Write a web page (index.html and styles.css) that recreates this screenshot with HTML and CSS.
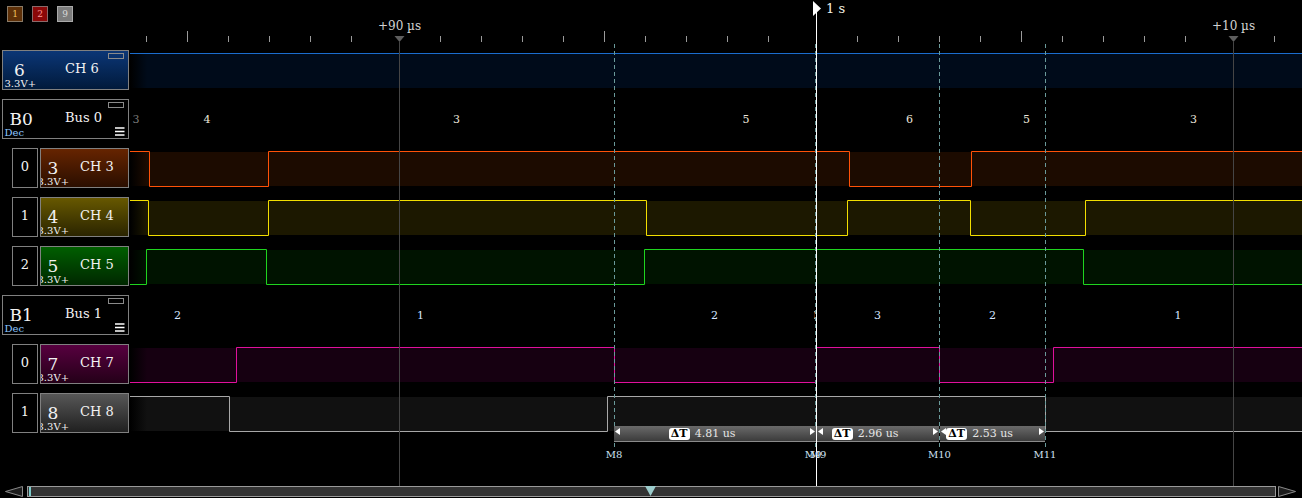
FILE: index.html
```html
<!DOCTYPE html>
<html>
<head>
<meta charset="utf-8">
<title>Logic analyzer</title>
<link rel="stylesheet" href="styles.css">
</head>
<body>
<div class="app">
  <header class="header">
    <svg class="ruler" width="1302" height="50" viewBox="0 0 1302 50">
      <g class="ticks">
        <line x1="146.5" y1="36" x2="146.5" y2="42"/>
        <line class="major" x1="187.5" y1="31" x2="187.5" y2="42"/>
        <line x1="228.5" y1="36" x2="228.5" y2="42"/>
        <line x1="269.5" y1="36" x2="269.5" y2="42"/>
        <line x1="310.5" y1="36" x2="310.5" y2="42"/>
        <line x1="351.5" y1="36" x2="351.5" y2="42"/>
        <line x1="440.5" y1="36" x2="440.5" y2="42"/>
        <line x1="481.5" y1="36" x2="481.5" y2="42"/>
        <line x1="522.5" y1="36" x2="522.5" y2="42"/>
        <line x1="563.5" y1="36" x2="563.5" y2="42"/>
        <line class="major" x1="604.5" y1="31" x2="604.5" y2="42"/>
        <line x1="645.5" y1="36" x2="645.5" y2="42"/>
        <line x1="686.5" y1="36" x2="686.5" y2="42"/>
        <line x1="727.5" y1="36" x2="727.5" y2="42"/>
        <line x1="768.5" y1="36" x2="768.5" y2="42"/>
        <line x1="857.5" y1="36" x2="857.5" y2="42"/>
        <line x1="898.5" y1="36" x2="898.5" y2="42"/>
        <line x1="939.5" y1="36" x2="939.5" y2="42"/>
        <line x1="980.5" y1="36" x2="980.5" y2="42"/>
        <line class="major" x1="1021.5" y1="31" x2="1021.5" y2="42"/>
        <line x1="1062.5" y1="36" x2="1062.5" y2="42"/>
        <line x1="1103.5" y1="36" x2="1103.5" y2="42"/>
        <line x1="1144.5" y1="36" x2="1144.5" y2="42"/>
        <line x1="1185.5" y1="36" x2="1185.5" y2="42"/>
        <line x1="1274.5" y1="36" x2="1274.5" y2="42"/>
      </g>
      <polygon class="mtri" points="394.5,36 404.5,36 399.5,42"/>
      <polygon class="mtri" points="1228.5,36 1238.5,36 1233.5,42"/>
      <text class="rtext" x="399.5" y="30" text-anchor="middle">+90 µs</text>
      <text class="rtext" x="1233.5" y="30" text-anchor="middle">+10 µs</text>
      <text class="ctext" x="826" y="13">1 s</text>
    </svg>
    <div class="swatches">
      <span class="sw sw1">1</span>
      <span class="sw sw2">2</span>
      <span class="sw sw9">9</span>
    </div>
  </header>

  <main class="rows">
    <!-- CH 6 -->
    <div class="row">
      <div class="lbl lbl-main ch6">
        <span class="num">6</span><span class="name">CH 6</span><span class="tag"></span>
        <span class="volt">3.3V+</span>
      </div>
      <svg class="trace" width="1172" height="40" viewBox="130 0 1172 40">
        <defs><linearGradient id="g6" gradientUnits="userSpaceOnUse" x1="130" y1="0" x2="147" y2="0"><stop offset="0" stop-color="#000"/><stop offset="1" stop-color="#000b1a"/></linearGradient></defs>
        <rect x="130" y="4" width="1172" height="34" fill="url(#g6)"/>
        <path class="w6" d="M130 3.5 H1302"/>
      </svg>
    </div>

    <!-- Bus 0 -->
    <div class="row">
      <div class="lbl lbl-main bus">
        <span class="num">B0</span><span class="name">Bus 0</span><span class="tag"></span>
        <span class="volt dec">Dec</span>
        <svg class="menu" width="10" height="9" viewBox="0 0 10 9"><path d="M0 1H9.5M0 4.5H9.5M0 8H9.5" stroke="#fff" stroke-width="1.3"/></svg>
      </div>
      <svg class="trace" width="1172" height="40" viewBox="130 0 1172 40">
        <text class="bv dim" x="136" y="24" text-anchor="middle">3</text>
        <text class="bv" x="207" y="24" text-anchor="middle">4</text>
        <text class="bv" x="456.5" y="24" text-anchor="middle">3</text>
        <text class="bv" x="746" y="24" text-anchor="middle">5</text>
        <text class="bv" x="909.5" y="24" text-anchor="middle">6</text>
        <text class="bv" x="1026.5" y="24" text-anchor="middle">5</text>
        <text class="bv" x="1193.5" y="24" text-anchor="middle">3</text>
      </svg>
    </div>

    <!-- CH 3 -->
    <div class="row">
      <div class="idx">0</div>
      <div class="lbl lbl-sub ch3">
        <span class="num">3</span><span class="name">CH 3</span>
        <span class="volt">3.3V+</span>
      </div>
      <svg class="trace" width="1172" height="40" viewBox="130 0 1172 40">
        <defs><linearGradient id="g3" gradientUnits="userSpaceOnUse" x1="130" y1="0" x2="147" y2="0"><stop offset="0" stop-color="#000"/><stop offset="1" stop-color="#1c0b00"/></linearGradient></defs>
        <rect x="130" y="4" width="1172" height="34" fill="url(#g3)"/>
        <path class="w3" d="M130 3.5 H149.5 V38.5 H268.5 V3.5 H849.5 V38.5 H971.5 V3.5 H1302"/>
      </svg>
    </div>

    <!-- CH 4 -->
    <div class="row">
      <div class="idx">1</div>
      <div class="lbl lbl-sub ch4">
        <span class="num">4</span><span class="name">CH 4</span>
        <span class="volt">3.3V+</span>
      </div>
      <svg class="trace" width="1172" height="40" viewBox="130 0 1172 40">
        <defs><linearGradient id="g4" gradientUnits="userSpaceOnUse" x1="130" y1="0" x2="147" y2="0"><stop offset="0" stop-color="#000"/><stop offset="1" stop-color="#1c1800"/></linearGradient></defs>
        <rect x="130" y="4" width="1172" height="34" fill="url(#g4)"/>
        <path class="w4" d="M130 3.5 H148.5 V38.5 H268.5 V3.5 H646.5 V38.5 H847.5 V3.5 H970.5 V38.5 H1085.5 V3.5 H1302"/>
      </svg>
    </div>

    <!-- CH 5 -->
    <div class="row">
      <div class="idx">2</div>
      <div class="lbl lbl-sub ch5">
        <span class="num">5</span><span class="name">CH 5</span>
        <span class="volt">3.3V+</span>
      </div>
      <svg class="trace" width="1172" height="40" viewBox="130 0 1172 40">
        <defs><linearGradient id="g5" gradientUnits="userSpaceOnUse" x1="130" y1="0" x2="147" y2="0"><stop offset="0" stop-color="#000"/><stop offset="1" stop-color="#001300"/></linearGradient></defs>
        <rect x="130" y="4" width="1172" height="34" fill="url(#g5)"/>
        <path class="w5" d="M130 38.5 H146.5 V3.5 H266.5 V38.5 H644.5 V3.5 H1083.5 V38.5 H1302"/>
      </svg>
    </div>

    <!-- Bus 1 -->
    <div class="row">
      <div class="lbl lbl-main bus">
        <span class="num">B1</span><span class="name">Bus 1</span><span class="tag"></span>
        <span class="volt dec">Dec</span>
        <svg class="menu" width="10" height="9" viewBox="0 0 10 9"><path d="M0 1H9.5M0 4.5H9.5M0 8H9.5" stroke="#fff" stroke-width="1.3"/></svg>
      </div>
      <svg class="trace" width="1172" height="40" viewBox="130 0 1172 40">
        <defs><clipPath id="c0"><rect x="814" y="0" width="3" height="40"/></clipPath></defs>
        <text class="bv b1" x="177.5" y="24" text-anchor="middle">2</text>
        <text class="bv b1" x="420.5" y="24" text-anchor="middle">1</text>
        <text class="bv b1" x="714.5" y="24" text-anchor="middle">2</text>
        <text class="bv b1" x="815.5" y="24" text-anchor="middle" clip-path="url(#c0)">0</text>
        <text class="bv b1" x="877.5" y="24" text-anchor="middle">3</text>
        <text class="bv b1" x="992.5" y="24" text-anchor="middle">2</text>
        <text class="bv b1" x="1178" y="24" text-anchor="middle">1</text>
      </svg>
    </div>

    <!-- CH 7 -->
    <div class="row">
      <div class="idx">0</div>
      <div class="lbl lbl-sub ch7">
        <span class="num">7</span><span class="name">CH 7</span>
        <span class="volt">3.3V+</span>
      </div>
      <svg class="trace" width="1172" height="40" viewBox="130 0 1172 40">
        <defs><linearGradient id="g7" gradientUnits="userSpaceOnUse" x1="130" y1="0" x2="147" y2="0"><stop offset="0" stop-color="#000"/><stop offset="1" stop-color="#160011"/></linearGradient></defs>
        <rect x="130" y="4" width="1172" height="34" fill="url(#g7)"/>
        <path class="w7" d="M130 38.5 H236.5 V3.5 H614.5 V38.5 H816.5 V3.5 H939.5 V38.5 H1053.5 V3.5 H1302"/>
      </svg>
    </div>

    <!-- CH 8 -->
    <div class="row">
      <div class="idx">1</div>
      <div class="lbl lbl-sub ch8">
        <span class="num">8</span><span class="name">CH 8</span>
        <span class="volt">3.3V+</span>
      </div>
      <svg class="trace" width="1172" height="40" viewBox="130 0 1172 40">
        <defs><linearGradient id="g8" gradientUnits="userSpaceOnUse" x1="130" y1="0" x2="147" y2="0"><stop offset="0" stop-color="#000"/><stop offset="1" stop-color="#111"/></linearGradient></defs>
        <rect x="130" y="4" width="1172" height="34" fill="url(#g8)"/>
        <path class="w8" d="M130 3.5 H229.5 V38.5 H607.5 V3.5 H1045.5 V38.5 H1302"/>
      </svg>
    </div>
  </main>

  <div class="spacer"></div>

  <footer class="scroll">
    <svg class="arrow" width="27" height="11" viewBox="0 0 27 11"><polygon points="22.5,0.5 22.5,10.5 5.5,5.5" fill="#1c1c1c" stroke="#8a8a8a"/></svg>
    <div class="track">
      <span class="vstart"></span>
      <span class="vpos"></span>
    </div>
    <svg class="arrow" width="26" height="11" viewBox="0 0 26 11"><polygon points="2.5,0.5 2.5,10.5 19.5,5.5" fill="#1c1c1c" stroke="#8a8a8a"/></svg>
  </footer>

  <div class="overlay">
    <svg class="ov" width="1302" height="498" viewBox="0 0 1302 498">
      <line class="mline" x1="399.5" y1="42" x2="399.5" y2="486"/>
      <line class="mline" x1="1233.5" y1="42" x2="1233.5" y2="486"/>
      <line class="dline" x1="614.5" y1="44" x2="614.5" y2="448"/>
      <line class="dline" x1="815.5" y1="44" x2="815.5" y2="448"/>
      <line class="dline" x1="939.5" y1="44" x2="939.5" y2="448"/>
      <line class="dline" x1="1045.5" y1="44" x2="1045.5" y2="448"/>
      <line class="cline" x1="816.5" y1="8" x2="816.5" y2="486"/>
      <polygon class="flag" points="813,1 821,8.5 813,16"/>
    </svg>
    <div class="meas m1"><span class="dt">ΔT</span><span class="mval">4.81 us</span></div>
    <div class="meas m2"><span class="dt">ΔT</span><span class="mval">2.96 us</span></div>
    <div class="meas m3"><span class="dt">ΔT</span><span class="mval">2.53 us</span></div>
    <span class="mk" style="left:614px">M8</span>
    <span class="mk" style="left:813px">M9</span>
    <span class="mk" style="left:818px">M9</span>
    <span class="mk" style="left:939.5px">M10</span>
    <span class="mk" style="left:1045px">M11</span>
  </div>
</div>
</body>
</html>
```

FILE: styles.css
```css
html, body {
  margin: 0;
  padding: 0;
  background: #000;
}

body {
  font-family: "DejaVu Serif", "Liberation Serif", serif;
  color: #e8e8e8;
}

.app {
  width: 1302px;
  height: 498px;
  position: relative;
  overflow: hidden;
  display: flex;
  flex-direction: column;
  background: #000;
}

/* ---------- header / ruler ---------- */
.header {
  flex: none;
  height: 50px;
  display: grid;
}

.header > * {
  grid-area: 1 / 1;
}

.ruler {
  display: block;
}

.ticks line {
  stroke: #9a9a9a;
  stroke-width: 1;
}

.mtri {
  fill: #5e5e5e;
}

.rtext {
  font-family: "DejaVu Serif", serif;
  font-size: 12px;
  fill: #d2d2d2;
}

.ctext {
  font-family: "DejaVu Serif", serif;
  font-size: 13px;
  fill: #f2f2e6;
}

.swatches {
  align-self: start;
  justify-self: start;
  display: flex;
  gap: 9px;
  padding: 6px 0 0 7px;
}

.sw {
  width: 16px;
  height: 16px;
  box-sizing: border-box;
  border: 1px solid #8a8a8a;
  font-size: 9px;
  line-height: 14px;
  text-align: center;
}

.sw1 { background: #5e3008; color: #f0c060; border-color: #8a7a66; }
.sw2 { background: #8a0808; color: #ff9a9a; border-color: #8a6a6a; }
.sw9 { background: #7c7c7c; color: #d8d8d8; border-color: #aaaaaa; }

/* ---------- rows ---------- */
.rows {
  flex: none;
  display: flex;
  flex-direction: column;
  gap: 9px;
}

.row {
  display: flex;
  height: 40px;
}

.trace {
  display: block;
  flex: none;
}

.trace path {
  fill: none;
  stroke-width: 1;
}

.w6 { stroke: #1b6dce; }
.w3 { stroke: #ff5208; }
.w4 { stroke: #f2de00; }
.w5 { stroke: #1fd41f; }
.w7 { stroke: #e0109c; }
.w8 { stroke: #a8a8a8; }

.bv {
  font-family: "DejaVu Serif", serif;
  font-size: 11px;
  fill: #ece6dc;
}

.bv.dim { fill: #7a7a7a; }
.bv.b1 { fill: #d6e6ff; }

/* labels */
.lbl {
  box-sizing: border-box;
  height: 40px;
  border: 1px solid #808080;
  display: grid;
  grid-template-rows: 27px 11px;
  overflow: hidden;
  flex: none;
  color: #f2f2f2;
}

.lbl-main {
  margin-left: 2px;
  margin-right: 1px;
  width: 127px;
  grid-template-columns: 62px 43px 20px;
}

.lbl-sub {
  margin-left: 2px;
  margin-right: 1px;
  width: 89px;
  grid-template-columns: 39px 48px;
}

.idx {
  flex: none;
  box-sizing: border-box;
  margin-left: 12px;
  width: 26px;
  height: 40px;
  border: 1px solid #808080;
  text-align: center;
  font-size: 13px;
  line-height: 13px;
  padding-top: 11px;
  color: #f2f2f2;
}

.num {
  grid-row: 1;
  grid-column: 1;
  font-size: 17px;
  line-height: 17px;
  margin-top: 10.5px;
  padding-left: 11px;
  white-space: nowrap;
}

.bus .num { padding-left: 6.5px; }
.lbl-sub .num { padding-left: 6.5px; }

.name {
  grid-row: 1;
  grid-column: 2;
  font-size: 13px;
  line-height: 13px;
  margin-top: 11px;
  white-space: nowrap;
}

.tag {
  grid-row: 1;
  grid-column: 3;
  width: 16px;
  height: 6px;
  box-sizing: border-box;
  border: 1px solid #8a8a8a;
  margin-top: 2px;
}

.volt {
  grid-row: 2;
  grid-column: 1 / -1;
  font-size: 10px;
  line-height: 10px;
  margin-top: 0.5px;
  padding-left: 1.5px;
  white-space: nowrap;
}

.lbl-sub .volt {
  margin-left: -5px;
}

.dec {
  grid-column: 1 / 3;
  color: #8cc6ff;
}

.menu {
  grid-row: 2;
  grid-column: 3;
  display: block;
  margin-left: 7px;
  margin-top: 0;
}

.ch6 { background: linear-gradient(#0b3676, #011a3b); }
.bus { background: #000; }
.ch3 { background: linear-gradient(#662400, #2a0e00); }
.ch4 { background: linear-gradient(#675800, #2a2400); }
.ch5 { background: linear-gradient(#005e00, #002700); }
.ch7 { background: linear-gradient(#57003f, #240018); }
.ch8 { background: linear-gradient(#575757, #202020); }

.spacer {
  flex: 1;
}

/* ---------- scrollbar ---------- */
.scroll {
  flex: none;
  height: 11px;
  margin-bottom: 1px;
  display: flex;
}

.arrow {
  display: block;
  flex: none;
}

.track {
  flex: 1;
  box-sizing: border-box;
  border: 1px solid #9a9a9a;
  background: #333333;
  position: relative;
}

.vstart {
  position: absolute;
  left: 1px;
  top: 0;
  width: 2px;
  height: 9px;
  background: #7ccccc;
}

.vpos {
  position: absolute;
  left: 617px;
  top: -1px;
  width: 11px;
  height: 10px;
  background: #9ccccc;
  clip-path: polygon(0 0, 100% 0, 50% 100%);
}

/* ---------- overlay ---------- */
.overlay {
  position: absolute;
  inset: 0;
  pointer-events: none;
}

.ov {
  position: absolute;
  left: 0;
  top: 0;
}

.mline { stroke: #454545; stroke-width: 1; }
.dline { stroke: #6a9a9a; stroke-width: 1; stroke-dasharray: 4 3; }
.cline { stroke: #ffffff; stroke-width: 1; }
.flag { fill: #ffffff; }

.meas {
  position: absolute;
  top: 426px;
  height: 16px;
  box-sizing: border-box;
  display: flex;
  align-items: center;
  justify-content: center;
  padding-right: 26px;
  background: linear-gradient(#6a6a6a, #3b3b3b);
  border-bottom: 1px solid #8a8a8a;
}

.meas::before,
.meas::after {
  content: "";
  position: absolute;
  top: 2px;
  width: 5px;
  height: 7px;
  background: #ffffff;
}

.meas::before {
  left: 1px;
  clip-path: polygon(0 50%, 100% 0, 100% 100%);
}

.meas::after {
  right: 1px;
  clip-path: polygon(0 0, 100% 50%, 0 100%);
}

.m1 { left: 614px; width: 202px; }
.m2 { left: 817px; width: 122px; }
.m3 { left: 940px; width: 105px; }

.dt {
  width: 21px;
  height: 12px;
  border-radius: 3px;
  background: #ffffff;
  color: #000000;
  font-size: 11px;
  font-weight: bold;
  line-height: 12px;
  text-align: center;
  margin-right: 5px;
  flex: none;
}

.mval {
  font-size: 11px;
  line-height: 12px;
  color: #e6e6e6;
  white-space: nowrap;
}

.mk {
  position: absolute;
  top: 449.5px;
  transform: translateX(-50%);
  font-size: 10px;
  line-height: 10px;
  color: #cfe0f2;
  white-space: nowrap;
}
```
